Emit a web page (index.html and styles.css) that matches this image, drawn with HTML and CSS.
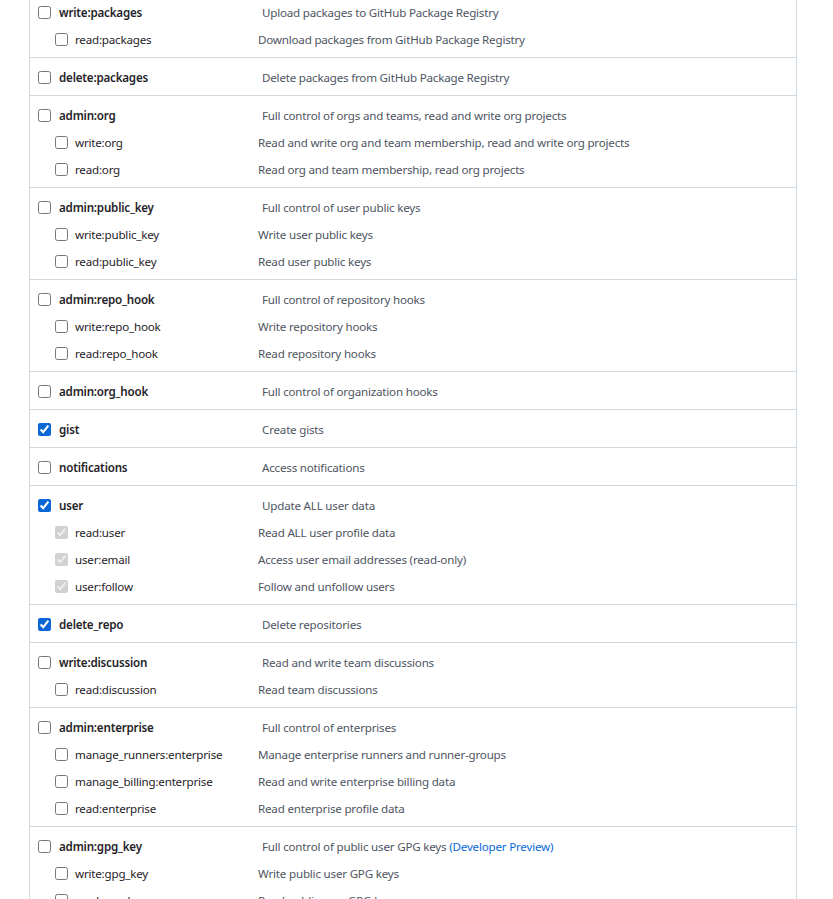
FILE: index.html
```html
<!DOCTYPE html>
<html>
<head>
<meta charset="utf-8">
<link rel="stylesheet" href="styles.css">
</head>
<body>
<ul class="scopes">
  <li class="group">
    <div class="row parent"><input type="checkbox"><span class="name">write:packages</span><span class="desc">Upload packages to GitHub Package Registry</span></div>
    <div class="row child"><input type="checkbox"><span class="name">read:packages</span><span class="desc">Download packages from GitHub Package Registry</span></div>
  </li>
  <li class="group">
    <div class="row parent"><input type="checkbox"><span class="name">delete:packages</span><span class="desc">Delete packages from GitHub Package Registry</span></div>
  </li>
  <li class="group">
    <div class="row parent"><input type="checkbox"><span class="name">admin:org</span><span class="desc">Full control of orgs and teams, read and write org projects</span></div>
    <div class="row child"><input type="checkbox"><span class="name">write:org</span><span class="desc">Read and write org and team membership, read and write org projects</span></div>
    <div class="row child"><input type="checkbox"><span class="name">read:org</span><span class="desc">Read org and team membership, read org projects</span></div>
  </li>
  <li class="group">
    <div class="row parent"><input type="checkbox"><span class="name">admin:public_key</span><span class="desc">Full control of user public keys</span></div>
    <div class="row child"><input type="checkbox"><span class="name">write:public_key</span><span class="desc">Write user public keys</span></div>
    <div class="row child"><input type="checkbox"><span class="name">read:public_key</span><span class="desc">Read user public keys</span></div>
  </li>
  <li class="group">
    <div class="row parent"><input type="checkbox"><span class="name">admin:repo_hook</span><span class="desc">Full control of repository hooks</span></div>
    <div class="row child"><input type="checkbox"><span class="name">write:repo_hook</span><span class="desc">Write repository hooks</span></div>
    <div class="row child"><input type="checkbox"><span class="name">read:repo_hook</span><span class="desc">Read repository hooks</span></div>
  </li>
  <li class="group">
    <div class="row parent"><input type="checkbox"><span class="name">admin:org_hook</span><span class="desc">Full control of organization hooks</span></div>
  </li>
  <li class="group">
    <div class="row parent"><input type="checkbox" checked><span class="name">gist</span><span class="desc">Create gists</span></div>
  </li>
  <li class="group">
    <div class="row parent"><input type="checkbox"><span class="name">notifications</span><span class="desc">Access notifications</span></div>
  </li>
  <li class="group">
    <div class="row parent"><input type="checkbox" checked><span class="name">user</span><span class="desc">Update ALL user data</span></div>
    <div class="row child"><input type="checkbox" checked disabled><span class="name">read:user</span><span class="desc">Read ALL user profile data</span></div>
    <div class="row child"><input type="checkbox" checked disabled><span class="name">user:email</span><span class="desc">Access user email addresses (read-only)</span></div>
    <div class="row child"><input type="checkbox" checked disabled><span class="name">user:follow</span><span class="desc">Follow and unfollow users</span></div>
  </li>
  <li class="group">
    <div class="row parent"><input type="checkbox" checked><span class="name">delete_repo</span><span class="desc">Delete repositories</span></div>
  </li>
  <li class="group">
    <div class="row parent"><input type="checkbox"><span class="name">write:discussion</span><span class="desc">Read and write team discussions</span></div>
    <div class="row child"><input type="checkbox"><span class="name">read:discussion</span><span class="desc">Read team discussions</span></div>
  </li>
  <li class="group">
    <div class="row parent"><input type="checkbox"><span class="name">admin:enterprise</span><span class="desc">Full control of enterprises</span></div>
    <div class="row child"><input type="checkbox"><span class="name">manage_runners:enterprise</span><span class="desc">Manage enterprise runners and runner-groups</span></div>
    <div class="row child"><input type="checkbox"><span class="name">manage_billing:enterprise</span><span class="desc">Read and write enterprise billing data</span></div>
    <div class="row child"><input type="checkbox"><span class="name">read:enterprise</span><span class="desc">Read enterprise profile data</span></div>
  </li>
  <li class="group">
    <div class="row parent"><input type="checkbox"><span class="name">admin:gpg_key</span><span class="desc">Full control of public user GPG keys <a class="link" href="#">(Developer Preview)</a></span></div>
    <div class="row child"><input type="checkbox"><span class="name">write:gpg_key</span><span class="desc">Write public user GPG keys</span></div>
    <div class="row child"><input type="checkbox"><span class="name">read:gpg_key</span><span class="desc">Read public user GPG keys</span></div>
  </li>
</ul>
</body>
</html>
```

FILE: styles.css
```css
html, body {
  margin: 0;
  padding: 0;
  background: #ffffff;
  overflow: hidden;
}

body {
  font-family: "Noto Sans", "Open Sans", sans-serif;
  font-size: 11.6px;
  letter-spacing: -0.2px;
  color: #1f2328;
}

.scopes {
  list-style: none;
  margin: -8px 0 0 29px;
  padding: 0;
  width: 766px;
  border-left: 1px solid #d1d9e0;
  border-right: 1px solid #d1d9e0;
}

.group {
  padding: 6px 0 4px;
  border-top: 1px solid #d1d9e0;
  margin-right: -1px;
}

.row {
  display: flex;
  align-items: center;
  height: 27px;
}

.row input {
  width: 13px;
  height: 13px;
  margin: 0;
  flex: none;
  accent-color: #0b66d6;
}

.parent {
  padding-left: 8px;
}

.parent input {
  margin-right: 8px;
}

.parent .name {
  width: 203px;
  font-weight: 600;
}

.child {
  padding-left: 25px;
}

.child input {
  margin-right: 7px;
}

.child .name {
  width: 183px;
}

.name {
  flex: none;
  white-space: nowrap;
}

.desc {
  color: #4e5562;
  white-space: nowrap;
}

.link {
  color: #0969da;
  text-decoration: none;
}
```
